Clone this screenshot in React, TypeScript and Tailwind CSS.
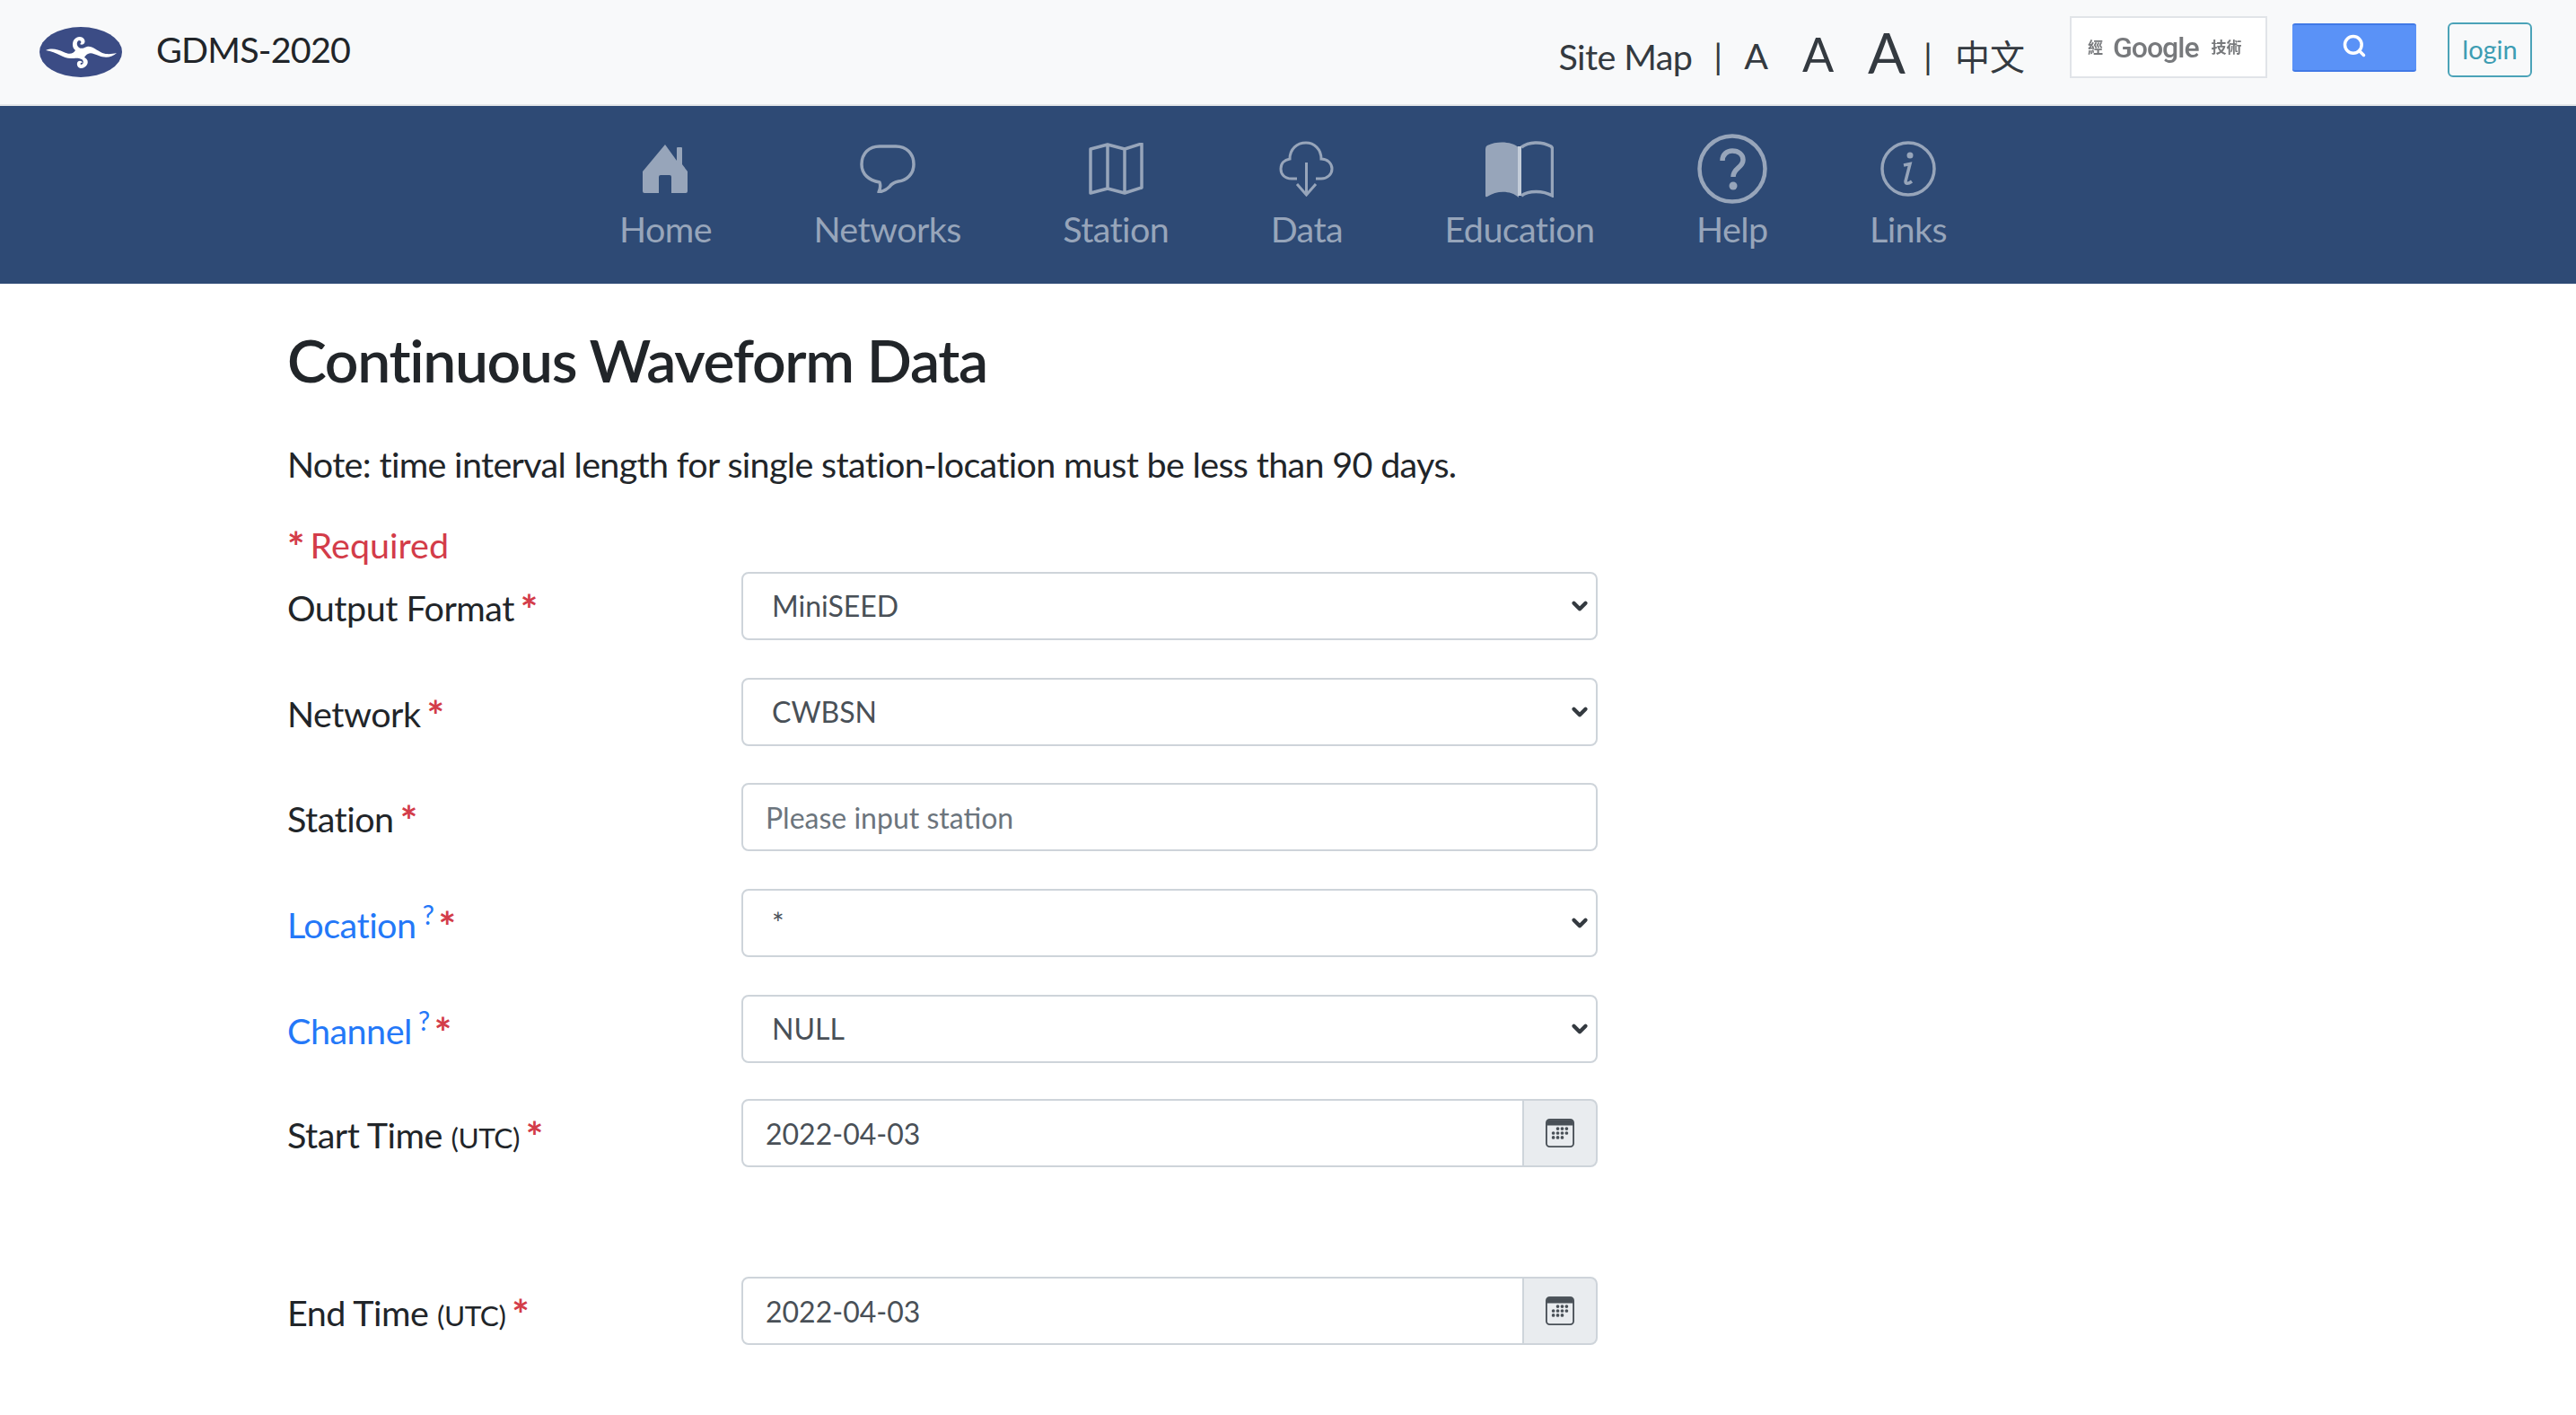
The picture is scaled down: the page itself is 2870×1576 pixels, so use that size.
import { ChevronDown, Search } from "lucide-react";
import type { ReactNode } from "react";

const LATO = "font-['Lato','Noto_Sans_CJK_TC',sans-serif]";

function Logo() {
  return (
    <svg width="92" height="56" viewBox="0 0 92 56" aria-hidden="true">
      <ellipse cx="46" cy="28" rx="46" ry="28" fill="#3b4c85" />
      <path
        d="M7 26 C14 23 20 25 27 28 C33 31 38 30 40 26 C37 24 36 19 38 15 C41 10 48 10 50 14 C52 18 48 21 45 19 C47 18 47 15 44 15 C41 16 41 21 44 23 C47 25 50 23 53 22 C59 21 63 26 70 29 C76 31 81 30 86 29 C81 34 73 35 66 32 C61 30 57 28 54 30 C52 31 51 32 50 34 C55 36 55 42 50 45 C45 48 41 44 42 40 C43 37 47 37 48 40 C46 39 45 41 46 42 C49 42 50 38 47 36 C43 34 40 35 35 35 C26 35 20 28 7 26 Z"
        fill="#fff"
      />
    </svg>
  );
}

const iconStroke = "#97a5ba";

function HomeIcon() {
  return (
    <svg width="50" height="54" viewBox="0 0 50 54" aria-hidden="true">
      <path
        d="M25 0 L38 18 V4 Q38 3 39 3 H43 Q44 3 44 4 V22 L50 30 V52 Q50 54 48 54 H32 V36 Q32 34 30 34 H20 Q18 34 18 36 V54 H2 Q0 54 0 52 V30 Z"
        fill={iconStroke}
      />
    </svg>
  );
}

function BubbleIcon() {
  return (
    <svg width="62" height="54" viewBox="0 0 62 54" fill="none" aria-hidden="true">
      <path
        d="M22 2 H40 C52 2 60 10 60 22 C60 33 52 40 43 41 C38 42 35 44 33 47 C30 50 26 52 21 53 C23 49 23 45 22 42 C10 40 2 33 2 22 C2 10 10 2 22 2 Z"
        stroke={iconStroke}
        strokeWidth="3.5"
        strokeLinejoin="round"
      />
    </svg>
  );
}

function MapIcon() {
  return (
    <svg width="61" height="58" viewBox="0 0 61 58" fill="none" aria-hidden="true">
      <path
        d="M2 7 L21 2 L40 7 L59 1 V50 L40 56 L21 51 L2 56 Z M21 2 V51 M40 7 V56"
        stroke={iconStroke}
        strokeWidth="3.5"
        strokeLinejoin="round"
      />
    </svg>
  );
}

function CloudIcon() {
  return (
    <svg width="61" height="62" viewBox="0 0 61 62" fill="none" aria-hidden="true">
      <path
        d="M20 42 H14 C6 42 2 37 2 31 C2 25 6 21 12 20 C12 9 20 2 30 2 C39 2 47 9 47 20 C54 20 59 25 59 31 C59 37 54 42 47 42 H41"
        stroke={iconStroke}
        strokeWidth="3"
      />
      <path d="M30.500 24 V59 M20 48 L30.500 60 L41 48" stroke={iconStroke} strokeWidth="3" />
    </svg>
  );
}

function BookIcon() {
  return (
    <svg width="76" height="64" viewBox="0 0 76 64" fill="none" aria-hidden="true">
      <path
        d="M37 8 C30 2 14 0 2 6 Q0 7 0 10 V62 Q0 64 2 63 C13 56 28 56 37 64 Z"
        fill={iconStroke}
      />
      <path d="M38 7 V62" stroke="#c3ccd8" strokeWidth="4" />
      <path
        d="M40 8 C48 2 62 1 73 7 Q74.500 8 74.500 10 V62 C64 56 48 56 40 62"
        stroke={iconStroke}
        strokeWidth="3.500"
      />
    </svg>
  );
}

function HelpIcon() {
  return (
    <svg width="78" height="78" viewBox="0 0 78 78" fill="none" aria-hidden="true">
      <circle cx="39" cy="39" r="36.500" stroke={iconStroke} strokeWidth="4.500" />
      <path
        d="M28 30 C28 23 33 19 39 19 C46 19 51 23 51 29 C51 38 40 38 40 48"
        stroke={iconStroke}
        strokeWidth="5.500"
      />
      <circle cx="40" cy="58" r="4.500" fill={iconStroke} />
    </svg>
  );
}

function InfoIcon() {
  return (
    <svg width="62" height="62" viewBox="0 0 62 62" fill="none" aria-hidden="true">
      <circle cx="31" cy="31" r="29" stroke={iconStroke} strokeWidth="3.500" />
      <circle cx="33" cy="16" r="3.500" fill={iconStroke} />
      <path
        d="M26 27 L33 25.500 L28 45 C28 48 31 48 35 45"
        stroke={iconStroke}
        strokeWidth="3.500"
      />
    </svg>
  );
}

function CalendarIcon() {
  const dots = [
    [11, 4], [15, 4], [19, 4],
    [7, 8], [11, 8], [15, 8], [19, 8],
    [7, 12], [11, 12], [15, 12],
  ];
  return (
    <svg width="32" height="32" viewBox="0 0 26 26" aria-hidden="true" className="text-[#495057]">
      <rect x="0.750" y="0.750" width="24.500" height="24.500" rx="3" fill="none" stroke="currentColor" strokeWidth="1.500" />
      <path d="M1 4 a3 3 0 0 1 3-3 h18 a3 3 0 0 1 3 3 v2 H1 Z" fill="currentColor" />
      {dots.map(([x, y]) => (
        <circle key={`${x}-${y}`} cx={x} cy={y + 5} r="1.500" fill="currentColor" />
      ))}
    </svg>
  );
}

const navItems = [
  { label: "Home", icon: <HomeIcon /> },
  { label: "Networks", icon: <BubbleIcon /> },
  { label: "Station", icon: <MapIcon /> },
  { label: "Data", icon: <CloudIcon /> },
  { label: "Education", icon: <BookIcon /> },
  { label: "Help", icon: <HelpIcon /> },
  { label: "Links", icon: <InfoIcon /> },
];

function Star({ className = "ml-[7px]" }: { className?: string }) {
  return (
    <span className={`${className} align-[-4px] text-[46px] font-bold leading-[0] text-[#d33c49]`}>*</span>
  );
}

function Label({ children }: { children: ReactNode }) {
  return (
    <div className="w-[506px] shrink-0 pt-[10px] text-[39.500px] leading-[60px] tracking-[-0.500px] text-[#212529]">
      {children}
    </div>
  );
}

function HelpLabel({ text }: { text: string }) {
  return (
    <Label>
      <a className="text-[#2478f8]">
        {text}
        <sup className="ml-[7px] text-[30px] leading-none">?</sup>
      </a>
      <Star className="ml-[5px]" />
    </Label>
  );
}

function SelectField({ value }: { value: string }) {
  return (
    <div className="relative h-[76px] w-[954px]">
      <select
        defaultValue={value}
        className={`${LATO} h-full w-full appearance-none rounded-[8px] border-2 border-[#ced4da] bg-white pl-[32px] text-[32px] text-[#495057]`}
      >
        <option>{value}</option>
      </select>
      <ChevronDown
        size={26}
        strokeWidth={4}
        className="pointer-events-none absolute right-[7px] top-[25px] text-[#343a40]"
      />
    </div>
  );
}

function TextField({ value, placeholder }: { value?: string; placeholder?: string }) {
  return (
    <input
      readOnly
      value={value}
      placeholder={placeholder}
      className={`${LATO} h-[76px] w-[954px] rounded-[8px] border-2 border-[#ced4da] bg-white pl-[25px] text-[32px] text-[#495057] placeholder:text-[#6c757d]`}
    />
  );
}

function DateField({ value }: { value: string }) {
  return (
    <div className="flex h-[76px] w-[954px]">
      <input
        readOnly
        value={value}
        className={`${LATO} h-full min-w-0 flex-1 rounded-l-[8px] border-2 border-[#ced4da] bg-white pl-[25px] text-[32px] text-[#495057]`}
      />
      <div className="-ml-[2px] flex h-full w-[84px] items-center justify-center rounded-r-[8px] border-2 border-[#ced4da] bg-[#e9ecef]">
        <CalendarIcon />
      </div>
    </div>
  );
}

export default function App() {
  return (
    <div className={`${LATO} min-h-[1576px] bg-white`}>
      <header className="flex h-[118px] items-center border-b-2 border-[#e5e7e9] bg-[#f8f9fa] pl-[44px] pr-[49px]">
        <Logo />
        <span className="-mt-[6px] ml-[38px] text-[39.500px] tracking-[-0.800px] text-[#212529]">GDMS-2020</span>
        <div className="ml-auto flex items-center text-[#343a40]">
          <span className="pt-[10px] text-[39.500px] tracking-[-0.600px]">Site Map</span>
          <span className="ml-[24px] pt-[8px] text-[39.500px]">|</span>
          <span className="ml-[24px] pt-[8px] text-[39.500px]">A</span>
          <span className="ml-[38px] pt-[4px] text-[52px]">A</span>
          <span className="ml-[38px] text-[62px] leading-none">A</span>
          <span className="ml-[20px] pt-[8px] text-[39.500px]">|</span>
          <span className="ml-[25px] pt-[10px] text-[39px]">中文</span>
          <div className="-mt-[11px] ml-[50px] flex h-[69px] w-[220px] items-center border-2 border-[#e1e4e8] bg-white pl-[18px] text-[#77797c]">
            <span className="text-[17px] font-bold blur-[0.6px]">經</span>
            <span className="ml-[11px] font-['Roboto',sans-serif] text-[32px] font-medium tracking-[-1px] blur-[0.5px]">Google</span>
            <span className="ml-[14px] text-[17px] font-bold blur-[0.6px]">技術</span>
          </div>
          <div className="-mt-[10px] ml-[28px] flex h-[54px] w-[138px] items-center justify-center rounded-[3px] border-y-2 border-[#4179e6] bg-[#5a92f7]">
            <Search size={28} strokeWidth={3} className="-mt-[4px] text-white" />
          </div>
          <div className="-mt-[6px] ml-[35px] flex h-[61px] w-[94px] items-center justify-center rounded-[6px] border-2 border-[#4ba3b8] text-[29px] text-[#3d9db3]">
            login
          </div>
        </div>
      </header>

      <nav className="flex h-[198px] justify-center gap-[113.500px] bg-[#2e4a75] pr-[11px] text-[39.500px] leading-[48px] tracking-[-0.600px] text-[#97a5ba]">
        {navItems.map((item) => (
          <div key={item.label} className="flex flex-col items-center">
            <div className="flex h-[110px] items-center pt-[30px]">{item.icon}</div>
            <span className="mt-[3px]">{item.label}</span>
          </div>
        ))}
      </nav>

      <main className="pl-[320px]">
        <h2 className="mt-[47px] text-[66px] font-semibold leading-[76px] tracking-[-1.330px] text-[#212529]">
          Continuous Waveform Data
        </h2>
        <p className="mt-[48px] text-[39.500px] leading-[60px] tracking-[-0.680px] text-[#212529]">
          Note: time interval length for single station-location must be less than 90 days.
        </p>
        <p className="mt-[30px] text-[39.500px] leading-[60px] text-[#d33c49]">
          <Star className="" />
          <span className="ml-[6px]">Required</span>
        </p>

        <div className="flex h-[117.500px]">
          <Label>
            Output Format
            <Star />
          </Label>
          <SelectField value="MiniSEED" />
        </div>
        <div className="flex h-[117.500px]">
          <Label>
            Network
            <Star />
          </Label>
          <SelectField value="CWBSN" />
        </div>
        <div className="flex h-[118px]">
          <Label>
            Station
            <Star />
          </Label>
          <TextField placeholder="Please input station" />
        </div>
        <div className="flex h-[118px]">
          <HelpLabel text="Location" />
          <SelectField value="*" />
        </div>
        <div className="flex h-[116px]">
          <HelpLabel text="Channel" />
          <SelectField value="NULL" />
        </div>
        <div className="flex h-[198px]">
          <Label>
            Start Time <span className="text-[31.600px]">(UTC)</span>
            <Star />
          </Label>
          <DateField value="2022-04-03" />
        </div>
        <div className="flex">
          <Label>
            End Time <span className="text-[31.600px]">(UTC)</span>
            <Star />
          </Label>
          <DateField value="2022-04-03" />
        </div>
      </main>
    </div>
  );
}
